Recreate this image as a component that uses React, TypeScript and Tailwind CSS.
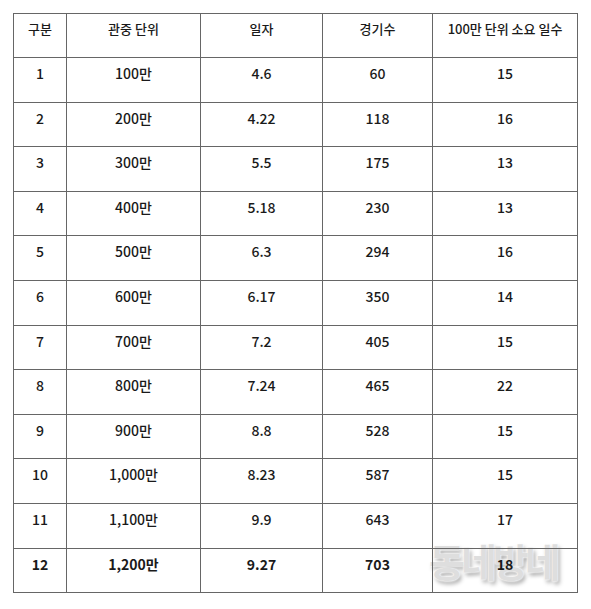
const rows: [string, string, string, string, string][] = [
  ['1', '100만', '4.6', '60', '15'],
  ['2', '200만', '4.22', '118', '16'],
  ['3', '300만', '5.5', '175', '13'],
  ['4', '400만', '5.18', '230', '13'],
  ['5', '500만', '6.3', '294', '16'],
  ['6', '600만', '6.17', '350', '14'],
  ['7', '700만', '7.2', '405', '15'],
  ['8', '800만', '7.24', '465', '22'],
  ['9', '900만', '8.8', '528', '15'],
  ['10', '1,000만', '8.23', '587', '15'],
  ['11', '1,100만', '9.9', '643', '17'],
  ['12', '1,200만', '9.27', '703', '18'],
];

const headers = ['구분', '관중 단위', '일자', '경기수', '100만 단위 소요 일수'];
const widths = ['w-[53px]', 'w-[134px]', 'w-[122px]', 'w-[110px]', 'w-[145px]'];

export default function App() {
  return (
    <div className="relative w-[591px] h-[609px] bg-white pt-[13px] pl-[13px] font-['Noto_Sans_CJK_KR',sans-serif] text-[13px] text-[#1a1a1a]">
      {/* watermark, sits under the table text */}
      <div className="absolute left-[429px] top-[541px] text-[39px] font-bold tracking-[-4px] text-[#dedede] leading-none [text-shadow:0_0_2px_#fff,0_0_2px_#fff,2px_3px_4px_rgba(0,0,0,0.35)]">
        동네방네
      </div>

      <table className="relative border-collapse table-fixed">
        <thead>
          <tr className="h-[44px]">
            {headers.map((h, i) => (
              <th
                key={h}
                className={`${widths[i]} border border-[#666] align-top pt-[5px] font-medium text-center`}
              >
                {h}
              </th>
            ))}
          </tr>
        </thead>
        <tbody>
          {rows.map((r, ri) => {
            const last = ri === rows.length - 1;
            return (
              <tr key={r[0]} className="h-[44.6px]">
                {r.map((c, ci) => (
                  <td
                    key={ci}
                    className={`border border-[#666] align-top pt-[5px] text-center text-[14px] ${last ? 'font-bold' : 'font-medium'}`}
                  >
                    {c}
                  </td>
                ))}
              </tr>
            );
          })}
        </tbody>
      </table>
    </div>
  );
}
